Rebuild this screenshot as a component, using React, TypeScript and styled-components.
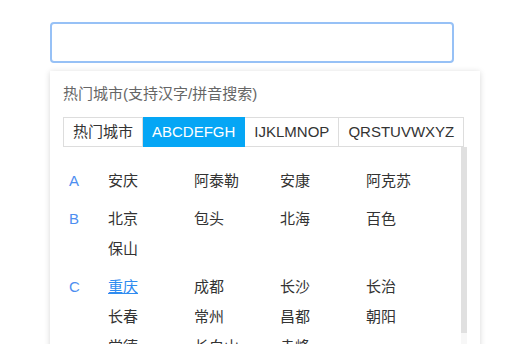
import React from "react";
import styled, { createGlobalStyle } from "styled-components";

const GlobalStyle = createGlobalStyle`
  body {
    margin: 0;
    background: #fff;
    font-family: "Liberation Sans", "Noto Sans CJK SC", sans-serif;
    color: #333;
  }
`;

const Page = styled.div`
  padding: 22px 0 0 50px;
`;

const SearchInput = styled.input`
  display: block;
  box-sizing: border-box;
  width: 404px;
  height: 41px;
  border: 2px solid #97c1f6;
  border-radius: 4px;
  outline: none;
  font-size: 15px;
  padding: 0 10px;
`;

const Panel = styled.div`
  margin-top: 8px;
  width: 430px;
  box-sizing: border-box;
  padding: 13px 13px 12px;
  background: #fff;
  box-shadow: 0 1px 6px rgba(0, 0, 0, 0.16);
`;

const Title = styled.div`
  font-size: 15px;
  line-height: 20px;
  color: #666;
  margin-bottom: 13px;
`;

const Tabs = styled.div`
  display: flex;
`;

const Tab = styled.div<{ $active?: boolean }>`
  height: 28px;
  line-height: 28px;
  padding: 0 9px;
  font-size: 15px;
  border: 1px solid #dddddd;
  border-left: none;
  white-space: nowrap;
  color: ${(p) => (p.$active ? "#fff" : "#333")};
  background: ${(p) => (p.$active ? "#05a6f5" : "#fff")};
  border-color: ${(p) => (p.$active ? "#05a6f5" : "#dddddd")};

  &:first-child {
    border-left: 1px solid #dddddd;
  }
`;

const ListArea = styled.div`
  display: flex;
  width: 404px;
  height: 329px;
  overflow: hidden;
`;

const List = styled.div`
  flex: 1;
  padding-top: 19px;
`;

const ScrollTrack = styled.div`
  width: 6px;
  background: #f7f7f7;
`;

const ScrollThumb = styled.div`
  height: 186px;
  background: #e0e0e0;
`;

const Group = styled.div`
  display: grid;
  grid-template-columns: 45px repeat(4, 86px);
  margin-bottom: 8px;
`;

const Letter = styled.div`
  grid-row: 1 / span 10;
  padding-left: 6px;
  font-size: 15px;
  line-height: 30px;
  color: #4d8ef0;
`;

const City = styled.a<{ $current?: boolean }>`
  font-size: 15px;
  line-height: 30px;
  white-space: nowrap;
  color: ${(p) => (p.$current ? "#2f8cf0" : "#333")};
  text-decoration: ${(p) => (p.$current ? "underline" : "none")};
  cursor: pointer;
`;

const groups: { letter: string; cities: string[] }[] = [
  { letter: "A", cities: ["安庆", "阿泰勒", "安康", "阿克苏"] },
  { letter: "B", cities: ["北京", "包头", "北海", "百色", "保山"] },
  {
    letter: "C",
    cities: ["重庆", "成都", "长沙", "长治", "长春", "常州", "昌都", "朝阳", "常德", "长白山", "赤峰"],
  },
  { letter: "D", cities: ["大连", "大理", "丹东", "大庆", "大同", "东营", "德宏"] },
  { letter: "E", cities: ["鄂尔多斯", "恩施"] },
  { letter: "F", cities: ["福州", "佛山", "阜阳", "抚远"] },
  { letter: "G", cities: ["广州", "贵阳", "桂林", "赣州", "格尔木"] },
  {
    letter: "H",
    cities: ["杭州", "合肥", "哈尔滨", "海口", "呼和浩特", "邯郸", "黄山", "惠州", "海拉尔"],
  },
];

const tabs = ["热门城市", "ABCDEFGH", "IJKLMNOP", "QRSTUVWXYZ"];

export default function App() {
  return (
    <Page>
      <GlobalStyle />
      <SearchInput type="text" />
      <Panel>
        <Title>热门城市(支持汉字/拼音搜索)</Title>
        <Tabs>
          {tabs.map((t) => (
            <Tab key={t} $active={t === "ABCDEFGH"}>
              {t}
            </Tab>
          ))}
        </Tabs>
        <ListArea>
          <List>
            {groups.map((g) => (
              <Group key={g.letter}>
                <Letter>{g.letter}</Letter>
                {g.cities.map((c) => (
                  <City key={c} $current={c === "重庆"}>
                    {c}
                  </City>
                ))}
              </Group>
            ))}
          </List>
          <ScrollTrack>
            <ScrollThumb />
          </ScrollTrack>
        </ListArea>
      </Panel>
    </Page>
  );
}
